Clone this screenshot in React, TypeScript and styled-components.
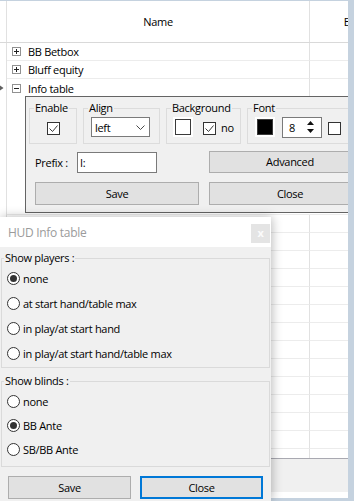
import React from 'react';
import styled, { createGlobalStyle } from 'styled-components';

const GlobalStyle = createGlobalStyle`
  * { box-sizing: border-box; }
  html, body { margin: 0; padding: 0; }
  body {
    width: 354px;
    height: 501px;
    overflow: hidden;
    background: #c5d2df;
    font-family: 'Open Sans', 'Noto Sans', sans-serif;
    font-size: 11px;
    letter-spacing: -0.3px;
    color: #000;
  }
`;

const Screen = styled.div`
  position: relative;
  width: 354px;
  height: 501px;
  padding: 1px 6px 3px 0;
  display: flex;
`;

const MainWindow = styled.div`
  flex: 1;
  min-width: 0;
  display: flex;
  flex-direction: column;
  background: #fff;
  overflow: hidden;
  padding-bottom: 6px;
`;

const Grid = styled.div`
  height: 457px;
  flex-shrink: 0;
  overflow: hidden;
  display: flex;
  flex-direction: column;
`;

const COLS = '7px 303px 108px';

const HeaderRow = styled.div`
  display: grid;
  grid-template-columns: ${COLS};
  height: 42px;
  flex-shrink: 0;
  border-bottom: 1px solid #d9d9d9;
`;

const HeaderCell = styled.div`
  border-right: 1px solid #e1e1e1;
  display: flex;
  align-items: center;
  justify-content: center;
  padding-bottom: 1px;
`;

const TreeRow = styled.div`
  display: grid;
  grid-template-columns: ${COLS};
  height: 18px;
  flex-shrink: 0;
`;

const Indicator = styled.div`
  border-right: 1px solid #e1e1e1;
  display: flex;
  align-items: center;
`;

const NameCell = styled.div<{ $line: boolean }>`
  border-right: 1px solid #e1e1e1;
  border-bottom: ${(p) => (p.$line ? '1px solid #ececec' : '0')};
  display: flex;
  align-items: center;
  gap: 7px;
  padding-left: 5px;
`;

const ValueCell = styled.div<{ $line: boolean }>`
  border-bottom: ${(p) => (p.$line ? '1px solid #ececec' : '0')};
`;

const DetailRow = styled.div`
  display: grid;
  grid-template-columns: 7px 409px;
  height: 119px;
  flex-shrink: 0;
  margin-top: -1px;
`;

const DetailBody = styled.div`
  padding-left: 18px;
  border-bottom: 1px solid #ececec;
`;

const Panel = styled.div`
  width: 356px;
  height: 117px;
  border: 1px solid #646464;
  background: #f0f0f0;
  display: flex;
  flex-direction: column;
  padding-top: 4px;
`;

const GroupsRow = styled.div`
  display: flex;
  gap: 6px;
  padding-left: 3px;
  height: 43px;
`;

const GroupBox = styled.fieldset<{ $w: number }>`
  margin: 0;
  padding: 0 4px;
  width: ${(p) => p.$w}px;
  min-width: 0;
  height: 43px;
  flex-shrink: 0;
  border: 1px solid #dcdcdc;
`;

const GroupLegend = styled.legend`
  padding: 0 1px;
  line-height: 14px;
`;

const GroupContent = styled.div<{ $pl: number; $center?: boolean }>`
  display: flex;
  align-items: center;
  height: 22px;
  margin-top: 1px;
  padding-left: ${(p) => p.$pl}px;
  justify-content: ${(p) => (p.$center ? 'center' : 'flex-start')};
  white-space: nowrap;
`;

const CheckBoxBox = styled.span<{ $ml?: number }>`
  width: 13px;
  height: 13px;
  margin-top: 2px;
  margin-left: ${(p) => p.$ml ?? 0}px;
  border: 1px solid #333;
  background: #fff;
  display: inline-flex;
  align-items: center;
  justify-content: center;
  flex-shrink: 0;
`;

const Swatch = styled.span<{ $c: string; $ml?: number }>`
  width: 20px;
  height: 20px;
  margin-left: ${(p) => p.$ml ?? 0}px;
  background: #fff;
  padding: 2px;
  display: inline-flex;
  flex-shrink: 0;
  &::after {
    content: '';
    flex: 1;
    border: 1px solid #3a3a3a;
    background: ${(p) => p.$c};
  }
`;

const Select = styled.div`
  width: 59px;
  height: 20px;
  margin-left: 3px;
  border: 1px solid #7a7a7a;
  background: #fff;
  display: flex;
  align-items: center;
  justify-content: space-between;
  padding: 0 4px 0 3px;
`;

const Spinner = styled.div`
  width: 40px;
  height: 21px;
  margin-left: 7px;
  border: 1px solid #7a7a7a;
  background: #fff;
  display: flex;
  align-items: center;
  justify-content: space-between;
  padding: 0 7px 0 6px;
`;

const InlineText = styled.span<{ $ml: number }>`
  margin-left: ${(p) => p.$ml}px;
`;

const FormGrid = styled.div<{ $mt: number; $h: number }>`
  display: grid;
  grid-template-columns: 164px 162px;
  column-gap: 10px;
  padding-left: 9px;
  margin-top: ${(p) => p.$mt}px;
  height: ${(p) => p.$h}px;
`;

const PrefixField = styled.div`
  display: flex;
  align-items: center;
`;

const PrefixLabel = styled.span`
  width: 42px;
  flex-shrink: 0;
`;

const TextInput = styled.div`
  width: 80px;
  height: 21px;
  border: 1px solid #7a7a7a;
  background: #fff;
  display: flex;
  align-items: center;
  padding-left: 2px;
`;

const Button = styled.div<{ $focus?: boolean }>`
  background: #e1e1e1;
  border: ${(p) => (p.$focus ? '2px solid #0078d7' : '1px solid #adadad')};
  display: flex;
  align-items: center;
  justify-content: center;
  padding-bottom: 1px;
`;

const Footer = styled.div`
  height: 34px;
  flex-shrink: 0;
  background: #f0f0f0;
  border-top: 1px solid #a9a9b1;
`;

const Dialog = styled.div`
  position: absolute;
  left: 0;
  top: 217px;
  width: 271px;
  height: 284px;
  background: #f0f0f0;
  box-shadow: 1px 0 10px rgba(0, 0, 0, 0.28);
  display: flex;
  flex-direction: column;
`;

const TitleBar = styled.div`
  height: 30px;
  flex-shrink: 0;
  background: #fff;
  display: flex;
  align-items: center;
  justify-content: space-between;
  padding: 0 1px 0 8px;
`;

const Title = styled.span`
  color: #9b9b9b;
  font-size: 12px;
  letter-spacing: -0.3px;
`;

const CloseBox = styled.div`
  align-self: flex-start;
  margin-top: 7px;
  width: 19px;
  height: 19px;
  background: #e4e4e4;
  color: #fbfbfb;
  font-weight: 700;
  font-size: 11px;
  display: flex;
  align-items: center;
  justify-content: center;
  padding-bottom: 2px;
`;

const DialogBody = styled.div`
  padding: 4px 1px 0 1px;
  display: flex;
  flex-direction: column;
`;

const OptionGroup = styled.fieldset<{ $mt: number; $h: number; $pt: number }>`
  margin: ${(p) => p.$mt}px 0 0 0;
  padding: ${(p) => p.$pt}px 0 0 2px;
  width: 269px;
  min-width: 0;
  height: ${(p) => p.$h}px;
  border: 1px solid #dadada;
`;

const OptionRow = styled.div<{ $h: number }>`
  height: ${(p) => p.$h}px;
  display: flex;
  align-items: center;
  padding-left: 3px;
  gap: 3px;
`;

const Radio = styled.span<{ $on: boolean }>`
  width: 13px;
  height: 13px;
  border-radius: 50%;
  border: 1px solid #333;
  background: #fff;
  display: inline-flex;
  align-items: center;
  justify-content: center;
  flex-shrink: 0;
  &::after {
    content: '';
    width: 7px;
    height: 7px;
    border-radius: 50%;
    background: #333;
    display: ${(p) => (p.$on ? 'block' : 'none')};
  }
`;

const DialogButtons = styled.div`
  display: grid;
  grid-template-columns: 123px 123px;
  column-gap: 9px;
  padding-left: 7px;
  margin-top: 9px;
  height: 23px;
`;

const ExpandIcon = ({ open }: { open?: boolean }) => (
  <svg width="9" height="9" viewBox="0 0 9 9" style={{ flexShrink: 0 }}>
    <rect x="0.5" y="0.5" width="8" height="8" fill="#fff" stroke="#919191" />
    <path d={open ? 'M2 4.5H7' : 'M2 4.5H7M4.5 2V7'} stroke="#222" />
  </svg>
);

const RowArrow = () => (
  <svg width="4" height="6" viewBox="0 0 4 6">
    <polygon points="0,0.5 3.5,3 0,5.5" fill="#606060" />
  </svg>
);

const Check = () => (
  <svg width="11" height="11" viewBox="0 0 11 11">
    <polyline points="1.5,5.5 4.5,8.5 9.5,2.5" fill="none" stroke="#3a3a3a" strokeWidth="1" />
  </svg>
);

const CheckBox = ({ checked, ml }: { checked?: boolean; ml?: number }) => (
  <CheckBoxBox $ml={ml}>{checked ? <Check /> : null}</CheckBoxBox>
);

const Chevron = () => (
  <svg width="9" height="5" viewBox="0 0 9 5">
    <polyline points="0.5,0.5 4.5,4.5 8.5,0.5" fill="none" stroke="#4a4a4a" />
  </svg>
);

const SpinArrows = () => (
  <svg width="7" height="14" viewBox="0 0 7 14">
    <polygon points="0,5 3.5,1 7,5" fill="#111" />
    <polygon points="0,9 7,9 3.5,13" fill="#111" />
  </svg>
);

const treeItems = [
  { name: 'BB Betbox', open: false },
  { name: 'Bluff equity', open: false },
];

const playerOptions = [
  { label: 'none', on: true },
  { label: 'at start hand/table max', on: false },
  { label: 'in play/at start hand', on: false },
  { label: 'in play/at start hand/table max', on: false },
];

const blindOptions = [
  { label: 'none', on: false },
  { label: 'BB Ante', on: true },
  { label: 'SB/BB Ante', on: false },
];

export default function App() {
  return (
    <>
      <GlobalStyle />
      <Screen>
        <MainWindow>
          <Grid>
            <HeaderRow>
              <HeaderCell />
              <HeaderCell>Name</HeaderCell>
              <HeaderCell>Enabled</HeaderCell>
            </HeaderRow>
            {treeItems.map((it) => (
              <TreeRow key={it.name}>
                <Indicator />
                <NameCell $line>
                  <ExpandIcon open={it.open} />
                  {it.name}
                </NameCell>
                <ValueCell $line />
              </TreeRow>
            ))}
            <TreeRow>
              <Indicator>
                <RowArrow />
              </Indicator>
              <NameCell $line={false}>
                <ExpandIcon open />
                Info table
              </NameCell>
              <ValueCell $line={false} />
            </TreeRow>
            <DetailRow>
              <Indicator />
              <DetailBody>
                <Panel>
                  <GroupsRow>
                    <GroupBox $w={48}>
                      <GroupLegend>Enable</GroupLegend>
                      <GroupContent $pl={0} $center>
                        <CheckBox checked ml={1} />
                      </GroupContent>
                    </GroupBox>
                    <GroupBox $w={77}>
                      <GroupLegend>Align</GroupLegend>
                      <GroupContent $pl={0}>
                        <Select>
                          <span>left</span>
                          <Chevron />
                        </Select>
                      </GroupContent>
                    </GroupBox>
                    <GroupBox $w={75}>
                      <GroupLegend>Background</GroupLegend>
                      <GroupContent $pl={0}>
                        <Swatch $c="#fff" $ml={2} />
                        <CheckBox checked ml={10} />
                        <InlineText $ml={5}>no</InlineText>
                      </GroupContent>
                    </GroupBox>
                    <GroupBox $w={130}>
                      <GroupLegend>Font</GroupLegend>
                      <GroupContent $pl={0}>
                        <Swatch $c="#000" $ml={3} />
                        <Spinner>
                          <span>8</span>
                          <SpinArrows />
                        </Spinner>
                        <CheckBox ml={6} />
                      </GroupContent>
                    </GroupBox>
                  </GroupsRow>
                  <FormGrid $mt={7} $h={22}>
                    <PrefixField>
                      <PrefixLabel>Prefix :</PrefixLabel>
                      <TextInput>I:</TextInput>
                    </PrefixField>
                    <Button>Advanced</Button>
                  </FormGrid>
                  <FormGrid $mt={9} $h={23}>
                    <Button>Save</Button>
                    <Button>Close</Button>
                  </FormGrid>
                </Panel>
              </DetailBody>
            </DetailRow>
            {Array.from({ length: 14 }).map((_, i) => (
              <TreeRow key={i}>
                <Indicator />
                <NameCell $line />
                <ValueCell $line />
              </TreeRow>
            ))}
          </Grid>
          <Footer />
        </MainWindow>

        <Dialog>
          <TitleBar>
            <Title>HUD Info table</Title>
            <CloseBox>x</CloseBox>
          </TitleBar>
          <DialogBody>
            <OptionGroup $mt={0} $h={117} $pt={1}>
              <GroupLegend>Show players :</GroupLegend>
              {playerOptions.map((o) => (
                <OptionRow key={o.label} $h={25}>
                  <Radio $on={o.on} />
                  {o.label}
                </OptionRow>
              ))}
            </OptionGroup>
            <OptionGroup $mt={6} $h={93} $pt={1}>
              <GroupLegend>Show blinds :</GroupLegend>
              {blindOptions.map((o) => (
                <OptionRow key={o.label} $h={24}>
                  <Radio $on={o.on} />
                  {o.label}
                </OptionRow>
              ))}
            </OptionGroup>
            <DialogButtons>
              <Button>Save</Button>
              <Button $focus>Close</Button>
            </DialogButtons>
          </DialogBody>
        </Dialog>
      </Screen>
    </>
  );
}
